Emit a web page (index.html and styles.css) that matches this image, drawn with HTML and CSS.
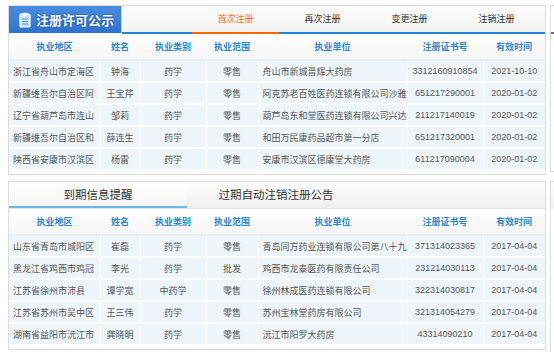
FILE: index.html
```html
<!DOCTYPE html>
<html lang="zh-CN">
<head>
  <meta charset="UTF-8" />
  <title>注册许可公示</title>
  <link rel="stylesheet" href="styles.css">
</head>
<body>
  <div class="page">
    <div class="main">
      <div class="panel">
        <div class="panel-head">
          <div class="title">
            <svg class="title-icon" width="12" height="16" viewBox="0 0 12 16">
              <rect x="1" y="2" width="10" height="13" rx="1" fill="#cfe3fa" stroke="#fff" stroke-width="1.2"/>
              <rect x="3.5" y="0.8" width="5" height="3" rx="0.8" fill="#fff"/>
              <line x1="3" y1="7" x2="9" y2="7" stroke="#5b95dc" stroke-width="1"/>
              <line x1="3" y1="9.5" x2="9" y2="9.5" stroke="#5b95dc" stroke-width="1"/>
              <line x1="3" y1="12" x2="9" y2="12" stroke="#5b95dc" stroke-width="1"/>
            </svg>
            <span>注册许可公示</span>
          </div>
          <div class="tabs">
            <span class="tab active">首次注册</span>
            <span class="tab">再次注册</span>
            <span class="tab">变更注册</span>
            <span class="tab">注销注册</span>
          </div>
        </div>
        <table class="list">
          <colgroup>
            <col style="width:91px"><col style="width:40px"><col style="width:66px"><col style="width:52px">
            <col style="width:149px"><col style="width:76px"><col style="width:62px">
          </colgroup>
          <thead>
            <tr><th>执业地区</th><th>姓名</th><th>执业类别</th><th>执业范围</th><th>执业单位</th><th>注册证书号</th><th>有效时间</th></tr>
          </thead>
          <tbody>
            <tr><td class="left">浙江省舟山市定海区</td><td>钟海</td><td>药学</td><td>零售</td><td class="left">舟山市新城晋辉大药房</td><td>3312160910854</td><td>2021-10-10</td></tr>
            <tr><td class="left">新疆维吾尔自治区阿</td><td>王宝芹</td><td>药学</td><td>零售</td><td class="left">阿克苏老百姓医药连锁有限公司沙雅</td><td>651217290001</td><td>2020-01-02</td></tr>
            <tr><td class="left">辽宁省葫芦岛市连山</td><td>邹莉</td><td>药学</td><td>零售</td><td class="left">葫芦岛东和堂医药连锁有限公司兴达</td><td>211217140019</td><td>2020-01-02</td></tr>
            <tr><td class="left">新疆维吾尔自治区和</td><td>薛连生</td><td>药学</td><td>零售</td><td class="left">和田万民康药品超市第一分店</td><td>651217320001</td><td>2020-01-02</td></tr>
            <tr><td class="left">陕西省安康市汉滨区</td><td>杨雷</td><td>药学</td><td>零售</td><td class="left">安康市汉滨区德康堂大药房</td><td>611217090004</td><td>2020-01-02</td></tr>
          </tbody>
        </table>
      </div>

      <div class="panel">
        <div class="notice-tabs">
          <span class="ntab active">到期信息提醒</span>
          <span class="ntab">过期自动注销注册公告</span>
        </div>
        <table class="list">
          <colgroup>
            <col style="width:91px"><col style="width:40px"><col style="width:66px"><col style="width:52px">
            <col style="width:149px"><col style="width:76px"><col style="width:62px">
          </colgroup>
          <thead>
            <tr><th>执业地区</th><th>姓名</th><th>执业类别</th><th>执业范围</th><th>执业单位</th><th>注册证书号</th><th>有效时间</th></tr>
          </thead>
          <tbody>
            <tr><td class="left">山东省青岛市城阳区</td><td>崔磊</td><td>药学</td><td>零售</td><td class="left">青岛同方药业连锁有限公司第八十九</td><td>371314023365</td><td>2017-04-04</td></tr>
            <tr><td class="left">黑龙江省鸡西市鸡冠</td><td>李光</td><td>药学</td><td>批发</td><td class="left">鸡西市龙泰医药有限责任公司</td><td>231214030113</td><td>2017-04-04</td></tr>
            <tr><td class="left">江苏省徐州市沛县</td><td>谭学宽</td><td>中药学</td><td>零售</td><td class="left">徐州林成医药连锁有限公司</td><td>322314030817</td><td>2017-04-04</td></tr>
            <tr><td class="left">江苏省苏州市吴中区</td><td>王三伟</td><td>药学</td><td>零售</td><td class="left">苏州宝林堂药房有限公司</td><td>321314054279</td><td>2017-04-04</td></tr>
            <tr><td class="left">湖南省益阳市沅江市</td><td>龚晓明</td><td>药学</td><td>零售</td><td class="left">沅江市阳罗大药房</td><td>43314090210</td><td>2017-04-04</td></tr>
          </tbody>
        </table>
      </div>
    </div>

    <div class="side">
      <div class="stub stub-top"></div>
      <div class="stub stub-bottom"></div>
    </div>
  </div>
</body>
</html>
```

FILE: styles.css
```css
body {
  margin: 0;
  padding: 0;
  background: #fff;
  font-family: "Liberation Sans", "Noto Sans CJK SC", sans-serif;
  color: #555;
  overflow: hidden;
}

.page {
  display: flex;
  gap: 4px;
  padding: 5px 0 0 8px;
}

.main {
  width: 538px;
  display: flex;
  flex-direction: column;
  gap: 6px;
}

.panel {
  border: 1px solid #dcdcdc;
  padding-bottom: 3px;
  background: #fff;
}

/* top header: title block + tabs */
.panel-head {
  display: flex;
  height: 28px;
}

.title {
  width: 113px;
  height: 27px;
  display: flex;
  align-items: center;
  gap: 5px;
  padding-left: 10px;
  box-sizing: border-box;
  background: linear-gradient(#4a8ee0, #2f72cf);
  border-right: 1px solid #c9d6e6;
  color: #fff;
  font-family: "Noto Sans CJK SC", sans-serif;
  font-size: 13px;
  font-weight: bold;
  text-shadow: 0 0 2px #1b4e9a, 0 0 1px #1b4e9a;
}

.title-icon {
  flex-shrink: 0;
}

.tabs {
  flex: 1;
  display: flex;
  padding-left: 70px;
  background: linear-gradient(#fdfdfd, #f3f3f3);
  border-bottom: 2px solid #2382d0;
}

.tab {
  width: 87px;
  text-align: center;
  line-height: 26px;
  font-family: "Noto Sans CJK SC", sans-serif;
  font-size: 9px;
  color: #333;
}

.tab.active {
  color: #ff6a00;
  border-bottom: 2px solid #ff6a00;
  margin-bottom: -2px;
}

/* second panel tabs */
.notice-tabs {
  display: flex;
  height: 26px;
  background: linear-gradient(#fff, #efefef);
  border-bottom: 1px solid #e2e2e2;
}

.ntab {
  width: 178px;
  text-align: center;
  line-height: 25px;
  font-family: "Noto Sans CJK SC", sans-serif;
  font-size: 11.5px;
  color: #333;
}

.ntab.active {
  border-bottom: 2px solid #6fb5ea;
  background: linear-gradient(#fff, #f6f6f6);
}

/* tables */
.list {
  width: 536px;
  table-layout: fixed;
  border-collapse: collapse;
  font-size: 9px;
}

.list th {
  height: 25px;
  padding: 0;
  color: #2a88c9;
  font-family: "Noto Sans CJK SC", sans-serif;
  font-weight: bold;
  background: linear-gradient(#fff, #f7f7f7);
  border-bottom: 2px solid #e8f0f6;
}

.list td {
  height: 20px;
  padding: 0;
  text-align: center;
  white-space: nowrap;
  overflow: hidden;
  background: #eef5fb;
  border-right: 1px solid #fff;
  border-bottom: 2px solid #fff;
  color: #555;
}

.list td:last-child {
  border-right: none;
}

.list td.left {
  text-align: left;
  padding-left: 4px;
  font-family: "Noto Sans CJK SC", sans-serif;
}

/* right edge stubs */
.side {
  flex: 1;
  display: flex;
  flex-direction: column;
  gap: 9px;
}

.stub {
  border: 1px solid #dcdcdc;
  border-right: none;
}

.stub-top {
  height: 165px;
  background: linear-gradient(#fff 0 26px, #2382d0 26px 28px, #fff 28px);
}

.stub-bottom {
  height: 175px;
  background: linear-gradient(#fff, #f1f1f1 26px, #fff 27px);
}
```
